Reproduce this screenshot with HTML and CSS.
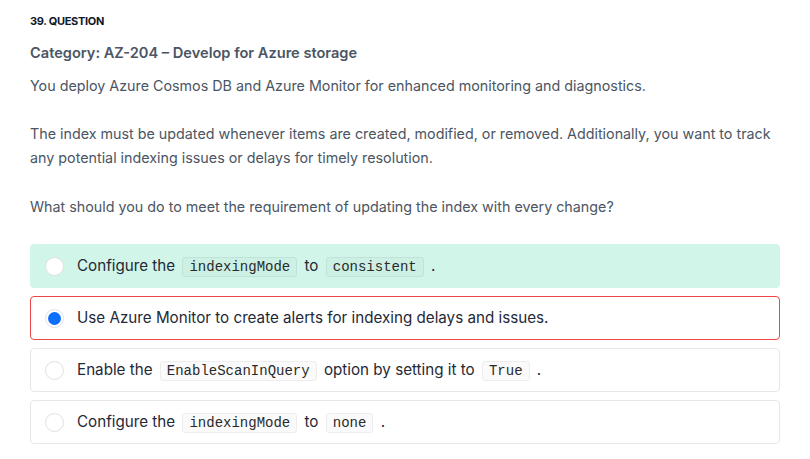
FILE: index.html
```html
<!DOCTYPE html>
<html>
<head>
<meta charset="utf-8">
<link rel="stylesheet" href="styles.css">
</head>
<body>
<div class="wrap">
  <div class="qnum">39. QUESTION</div>
  <p class="cat">Category: AZ-204 – Develop for Azure storage</p>
  <p class="txt">You deploy Azure Cosmos DB and Azure Monitor for enhanced monitoring and diagnostics.</p>
  <p class="txt">The index must be updated whenever items are created, modified, or removed. Additionally, you want to track any potential indexing issues or delays for timely resolution.</p>
  <p class="txt">What should you do to meet the requirement of updating the index with every change?</p>
  <div class="opts">
    <div class="opt correct"><span class="radio"></span><span class="label">Configure the <code>indexingMode</code> to <code>consistent</code> .</span></div>
    <div class="opt wrong"><span class="radio checked"></span><span class="label">Use Azure Monitor to create alerts for indexing delays and issues.</span></div>
    <div class="opt"><span class="radio"></span><span class="label">Enable the <code>EnableScanInQuery</code> option by setting it to <code>True</code> .</span></div>
    <div class="opt"><span class="radio"></span><span class="label">Configure the <code>indexingMode</code> to <code>none</code> .</span></div>
  </div>
</div>
</body>
</html>
```
FILE: styles.css
```css
html, body { margin: 0; padding: 0; background: #fff; }
body { font-family: Inter, "Noto Sans", sans-serif; }
.wrap { padding: 13px 30px 0 30px; width: 750px; }
.qnum { font-size: 11px; font-weight: 700; color: #111827; letter-spacing: -0.3px; line-height: 16px; }
.cat { margin: 12px 0 0; font-size: 14.6px; font-weight: 600; color: #4b5563; line-height: 24px; }
.txt { margin: 9px 0 25px; font-size: 14.3px; color: #4b5563; line-height: 24px; }
.txt + .txt { margin-top: 0; }
.txt:nth-of-type(2) { margin-bottom: 24px; }
.opts { margin-top: 1px; display: flex; flex-direction: column; gap: 8px; }
.opt { display: flex; align-items: center; height: 42px; border: 1px solid #e5e7eb; border-radius: 4px; padding: 0 14px; }
.opt.correct { background: #d1f5e8; border-color: #d1f5e8; }
.opt.wrong { border-color: #ef4444; }
.radio { width: 17px; height: 17px; border: 1px solid #dde1e7; border-radius: 50%; background: #fff; flex: none; margin-right: 13px; box-sizing: content-box; position: relative; }
.radio.checked::after { content: ""; position: absolute; left: 2px; top: 2px; width: 13px; height: 13px; border-radius: 50%; background: #0b6efd; }
.label { font-size: 15.2px; color: #1f2937; line-height: 22px; }
code { font-family: "Liberation Mono", "Courier New", monospace; font-size: 14px; color: #2a2a2a; background: rgba(0,0,0,0.02); border: 1px solid rgba(0,0,0,0.05); border-radius: 3px; padding: 1px 6px; margin: 0 3px; }
```
